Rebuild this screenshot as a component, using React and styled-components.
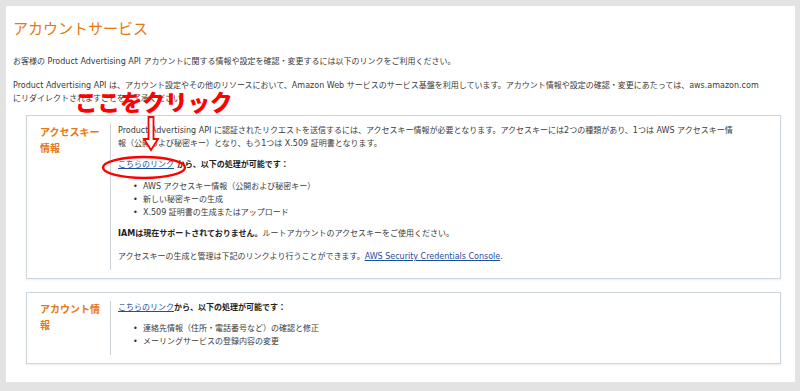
import React from "react";
import styled, { createGlobalStyle } from "styled-components";

const GlobalStyle = createGlobalStyle`
  html, body { margin: 0; padding: 0; background: #e3e3e3; }
  body { font-family: "DejaVu Sans", "Noto Sans CJK JP", sans-serif; }
  * { box-sizing: border-box; }
`;

const Page = styled.div`
  width: 800px;
  height: 391px;
  padding: 6px 5px 9px 6px;
  background: #e3e3e3;
  overflow: hidden;
`;

const Panel = styled.div`
  position: relative;
  background: #fff;
  padding: 12px 7px 18px 7px;
`;

const Title = styled.h1`
  margin: 0;
  font-family: "Noto Sans CJK JP", sans-serif;
  font-weight: 400;
  font-size: 15px;
  line-height: 20px;
  color: #e47911;
`;

const Text = styled.p`
  margin: ${(p) => p.$mt || 0}px 0 0;
  font-size: 8px;
  line-height: 13px;
  color: #3a3a3a;
  white-space: nowrap;
`;

const Box = styled.section`
  display: flex;
  margin: ${(p) => p.$mt}px 7px 0 13px;
  padding: 8px 0;
  border: 1px solid #cdd6dc;
  box-shadow: 0 1px 2px rgba(0, 0, 0, 0.07);
  background: #fff;
`;

const Label = styled.h2`
  margin: 0;
  width: 83px;
  flex: none;
  padding: 0 4px 0 13px;
  font-family: "Noto Sans CJK JP", sans-serif;
  font-weight: 700;
  font-size: 10px;
  line-height: 16px;
  color: #e47911;
`;

const Content = styled.div`
  flex: 1;
  border-left: 1px solid #c9d1d6;
  padding: 0 14px 7px 7px;
`;

const Link = styled.a`
  color: #1d4f9f;
  text-decoration: underline;
  font-weight: 400;
`;

const Strong = styled.b`
  color: #222;
  font-weight: 700;
`;

const List = styled.ul`
  list-style: none;
  margin: ${(p) => p.$mt}px 0 0;
  padding: 0 0 0 15px;
`;

const Item = styled.li`
  display: flex;
  font-size: 8px;
  line-height: 13px;
  color: #3a3a3a;
  white-space: nowrap;
  &::before {
    content: "•";
    width: 10px;
    flex: none;
    color: #333;
  }
`;

const Annotation = styled.div`
  position: absolute;
  left: 69px;
  top: 83px;
  font-family: "Noto Sans CJK JP", sans-serif;
  font-weight: 900;
  font-size: 22.5px;
  line-height: 24px;
  color: #ff0000;
  white-space: nowrap;
  pointer-events: none;
`;

const Marks = styled.svg`
  position: absolute;
  left: 0;
  top: 0;
  pointer-events: none;
`;

export default function App() {
  return (
    <>
      <GlobalStyle />
      <Page>
        <Panel>
          <Title>アカウントサービス</Title>
          <Text $mt={16.5}>
            お客様の Product Advertising API アカウントに関する情報や設定を確認・変更するには以下のリンクをご利用ください。
          </Text>
          <Text $mt={11}>
            Product Advertising API は、アカウント設定やその他のリソースにおいて、Amazon Web サービスのサービス基盤を利用しています。アカウント情報や設定の確認・変更にあたっては、aws.amazon.com
            <br />
            にリダイレクトされますことをご了承ください。
          </Text>

          <Box $mt={10.5}>
            <Label>アクセスキー情報</Label>
            <Content>
              <Text>
                Product Advertising API に認証されたリクエストを送信するには、アクセスキー情報が必要となります。アクセスキーには2つの種類があり、1つは AWS アクセスキー情
                <br />
                報（公開および秘密キー）となり、もう1つは X.509 証明書となります。
              </Text>
              <Text $mt={8}>
                <Link href="#">こちらのリンク</Link>
                <Strong> から、以下の処理が可能です：</Strong>
              </Text>
              <List $mt={9}>
                <Item>AWS アクセスキー情報（公開および秘密キー）</Item>
                <Item>新しい秘密キーの生成</Item>
                <Item>X.509 証明書の生成またはアップロード</Item>
              </List>
              <Text $mt={8}>
                <Strong>IAMは現在サポートされておりません。</Strong>ルートアカウントのアクセスキーをご使用ください。
              </Text>
              <Text $mt={10}>
                アクセスキーの生成と管理は下記のリンクより行うことができます。
                <Link href="#">AWS Security Credentials Console</Link>.
              </Text>
            </Content>
          </Box>

          <Box $mt={13}>
            <Label>アカウント情報</Label>
            <Content>
              <Text>
                <Link href="#">こちらのリンク</Link>
                <Strong>から、以下の処理が可能です：</Strong>
              </Text>
              <List $mt={8}>
                <Item>連絡先情報（住所・電話番号など）の確認と修正</Item>
                <Item>メーリングサービスの登録内容の変更</Item>
              </List>
            </Content>
          </Box>

          <Annotation>ここをクリック</Annotation>
          <Marks width="789" height="376" viewBox="0 0 789 376">
            <polygon
              points="142.5,111 147.5,111 147.5,133 152,133 145,144 138,133 142.5,133"
              fill="#fff"
              stroke="#ff0000"
              strokeWidth="1.8"
              strokeLinejoin="miter"
            />
            <ellipse
              cx="138"
              cy="161.5"
              rx="41"
              ry="10.5"
              fill="none"
              stroke="#ff0000"
              strokeWidth="2.4"
            />
          </Marks>
        </Panel>
      </Page>
    </>
  );
}
